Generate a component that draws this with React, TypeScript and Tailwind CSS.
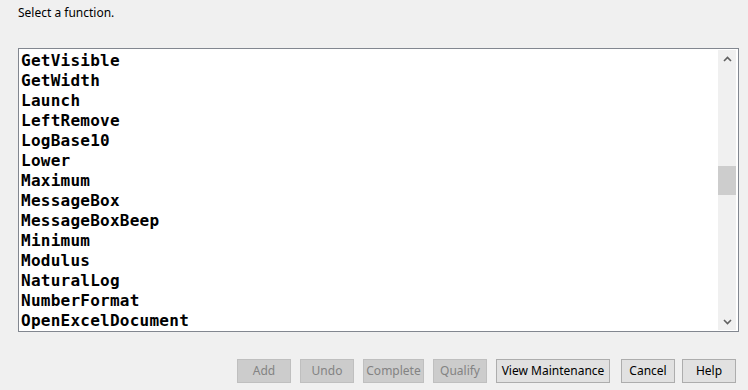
const items = [
  "GetVisible",
  "GetWidth",
  "Launch",
  "LeftRemove",
  "LogBase10",
  "Lower",
  "Maximum",
  "MessageBox",
  "MessageBoxBeep",
  "Minimum",
  "Modulus",
  "NaturalLog",
  "NumberFormat",
  "OpenExcelDocument",
];

function Btn({ label, w, disabled }: { label: string; w: string; disabled?: boolean }) {
  return (
    <button
      className={
        disabled
          ? `${w} h-[24px] shrink-0 border border-[#bfbfbf] bg-[#cccccc] text-[#838383] text-[12px] leading-none`
          : `${w} h-[24px] shrink-0 border border-[#adadad] bg-[#e1e1e1] text-black text-[12px] leading-none`
      }
      style={{ fontFamily: '"Noto Sans", "Open Sans", sans-serif' }}
    >
      {label}
    </button>
  );
}

export default function App() {
  return (
    <div
      className="w-[748px] h-[390px] bg-[#f0f0f0] flex flex-col overflow-hidden"
      style={{ fontFamily: '"Noto Sans", "Open Sans", sans-serif' }}
    >
      <div className="pl-[18px] pt-[5px] h-[48px] text-[12px] leading-[16px] text-black">
        Select a function.
      </div>

      <div className="ml-[18px] w-[721px] h-[284px] border border-[#828790] bg-white flex p-[1px] pr-[2px]">
        <div className="flex-1 flex flex-col pt-[1px]">
          {items.map((it) => (
            <div
              key={it}
              className="h-[20px] leading-[20px] pl-[1px] text-[16px] font-bold text-black tracking-[0.25px]"
              style={{ fontFamily: '"DejaVu Sans Mono", "Liberation Mono", monospace' }}
            >
              {it}
            </div>
          ))}
        </div>

        {/* scrollbar */}
        <div className="w-[18px] bg-[#f0f0f0] flex flex-col">
          <div className="h-[17px] flex items-center justify-center">
            <svg width="9" height="6" viewBox="0 0 9 6">
              <path d="M1 5 L4.5 1.5 L8 5" fill="none" stroke="#606060" strokeWidth="1.6" />
            </svg>
          </div>
          <div className="flex-1 flex flex-col">
            <div className="h-[99px]" />
            <div className="h-[29px] bg-[#cdcdcd]" />
          </div>
          <div className="h-[17px] flex items-center justify-center">
            <svg width="9" height="6" viewBox="0 0 9 6">
              <path d="M1 1 L4.5 4.5 L8 1" fill="none" stroke="#606060" strokeWidth="1.6" />
            </svg>
          </div>
        </div>
      </div>

      <div className="flex mt-[27px] pl-[237px]">
        <Btn label="Add" w="w-[54px]" disabled />
        <div className="w-[9px]" />
        <Btn label="Undo" w="w-[54px]" disabled />
        <div className="w-[9px]" />
        <Btn label="Complete" w="w-[61px]" disabled />
        <div className="w-[9px]" />
        <Btn label="Qualify" w="w-[54px]" disabled />
        <div className="w-[9px]" />
        <Btn label="View Maintenance" w="w-[114px]" />
        <div className="w-[11px]" />
        <Btn label="Cancel" w="w-[54px]" />
        <div className="w-[7px]" />
        <Btn label="Help" w="w-[54px]" />
      </div>
    </div>
  );
}
